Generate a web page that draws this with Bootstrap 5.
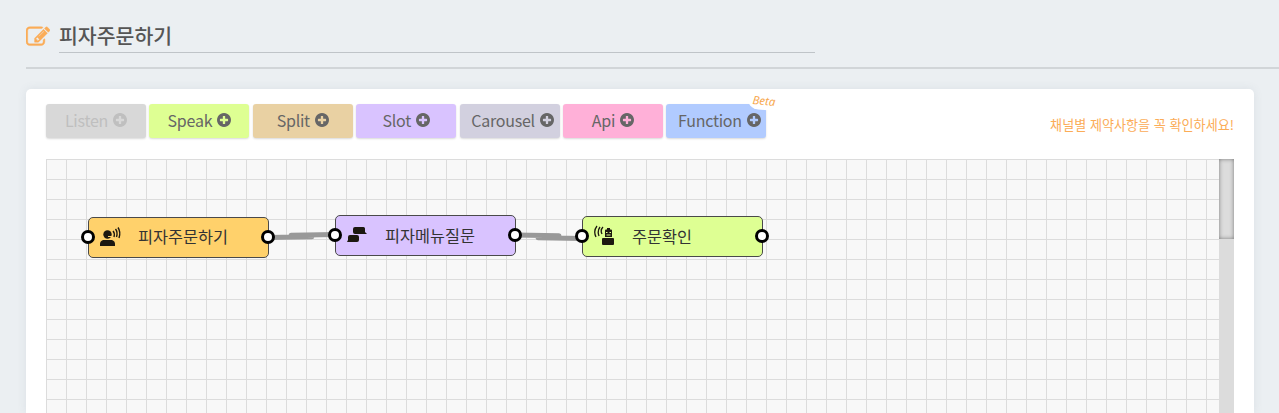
<!DOCTYPE html>
<html lang="ko">
<head>
<meta charset="utf-8">
<meta name="viewport" content="width=device-width, initial-scale=1">
<title>피자주문하기</title>
<link rel="stylesheet" href="https://cdn.jsdelivr.net/npm/bootstrap@5.3.0/dist/css/bootstrap.min.css">
<style>
body{background:#ebeff2;color:#555;font-family:"Noto Sans CJK KR",sans-serif;height:413px;overflow:hidden}
.page-head{margin-left:26px;height:69px;border-bottom:2px solid #d1d5d8;padding-top:19px}
.head-icon{width:24px;height:24px;margin-top:6px;color:#fbac57}
.scenario-name{width:756px;height:34px;margin-left:9px;border-bottom:1px solid #bfc4c8;font-size:20.5px;line-height:32px;font-weight:500}
.panel{margin:20px 25px 0 26px;height:324px;padding:15px 20px 0;border-radius:5px 5px 0 0;box-shadow:0 0 10px rgba(80,100,120,.1)}
.tools{height:55px}
.tool{width:100px;height:34px;margin-right:3.4px;padding:0 0 2px;border:0;border-radius:3px;color:#666;font:400 16px/32px "Noto Sans CJK KR",sans-serif;letter-spacing:-.25px;box-shadow:0 1px 2px rgba(0,0,0,.15);gap:5px}
.tool svg{width:14px;height:14px}
.t-listen{background:#d8d8d8;color:#bfbfbf}.t-speak{background:#deff93}.t-split{background:#e9d1a3}
.t-slot{background:#d9c3ff}.t-carousel{background:#d2d0df}.t-api{background:#ffb0d8}.t-function{background:#b1cbff}
.t-carousel,.t-function{padding-left:6px}
.beta{left:81px;top:-13px;width:34px;height:19px;border-radius:0 0 0 12px;background:#fff;transform:rotate(5deg);color:#f7a94f;font-family:"Noto Sans",sans-serif;font-size:11.5px;letter-spacing:0;line-height:19px;font-style:italic;text-align:center}
.notice{font-size:13.1px;line-height:20px;color:#fbac57;margin-top:11px}
.flow{height:254px}
.board{background-color:#f8f8f8;background-image:linear-gradient(#dcdcdc 1px,transparent 1px),linear-gradient(90deg,#dcdcdc 1px,transparent 1px);background-size:20px 20px}
.track{width:15px;background:#dcdcdc}
.thumb{height:80px;background:#dcdcdc;box-shadow:inset 0 0 4px #777}
.node{width:181px;height:41px;border:1px solid #4a4a4a;border-radius:5px;color:#333;font-size:16.3px;line-height:38px}
.node .glyph{position:absolute;left:10px;top:7px;width:24px;height:24px;color:#1c1810}
.node .caption{padding-left:49px}
.node-listen{line-height:36px}
.port{width:14px;height:14px;border:3px solid #000;border-radius:50%;background:#fff;top:12px}
.port-in{left:-8px}.port-out{right:-7px}
.links{left:0;top:0}
</style>
<script src="https://cdn.jsdelivr.net/npm/bootstrap@5.3.0/dist/js/bootstrap.bundle.min.js"></script>
</head>
<body>
<svg class="d-none"><symbol id="plus" viewBox="128 128 1536 1536"><path fill="currentColor" d="M1344 960v-128q0-26-19-45t-45-19h-256v-256q0-26-19-45t-45-19h-128q-26 0-45 19t-19 45v256h-256q-26 0-45 19t-19 45v128q0 26 19 45t45 19h256v256q0 26 19 45t45 19h128q26 0 45-19t19-45v-256h256q26 0 45-19t19-45zm320-64q0 209-103 385.500t-279.500 279.500-385.500 103-385.500-103-279.500-279.500-103-385.500 103-385.500 279.500-279.500 385.500-103 385.500 103 279.500 279.500 103 385.500z"/></symbol></svg>
<header class="page-head d-flex align-items-start">
<svg class="head-icon flex-shrink-0" viewBox="0 0 1792 1792"><path fill="currentColor" stroke="currentColor" stroke-width="30" d="M888 1184l116-116-152-152-116 116v56h96v96h56zm440-720q-16-16-33 1l-350 350q-17 17-1 33t33-1l350-350q17-17 1-33zm80 594v190q0 119-84.500 203.500t-203.500 84.500h-832q-119 0-203.500-84.500t-84.500-203.500v-832q0-119 84.500-203.500t203.500-84.500h832q63 0 117 25 15 7 18 23 3 17-9 29l-49 49q-14 14-32 8-23-6-45-6h-832q-66 0-113 47t-47 113v832q0 66 47 113t113 47h832q66 0 113-47t47-113v-126q0-13 9-22l64-64q15-15 35-7t20 29zm-96-738l288 288-672 672h-288v-288zm444 132l-92 92-288-288 92-92q28-28 68-28t68 28l152 152q28 28 28 68t-28 68z"/></svg>
<div class="scenario-name">피자주문하기</div>
</header>
<main class="panel bg-white">
<div class="tools d-flex align-items-start">
<button class="tool t-listen d-flex align-items-center justify-content-center"><span>Listen</span><svg><use href="#plus"/></svg></button>
<button class="tool t-speak d-flex align-items-center justify-content-center"><span>Speak</span><svg><use href="#plus"/></svg></button>
<button class="tool t-split d-flex align-items-center justify-content-center"><span>Split</span><svg><use href="#plus"/></svg></button>
<button class="tool t-slot d-flex align-items-center justify-content-center"><span>Slot</span><svg><use href="#plus"/></svg></button>
<button class="tool t-carousel d-flex align-items-center justify-content-center"><span>Carousel</span><svg><use href="#plus"/></svg></button>
<button class="tool t-api d-flex align-items-center justify-content-center"><span>Api</span><svg><use href="#plus"/></svg></button>
<button class="tool t-function d-flex align-items-center justify-content-center position-relative"><span>Function</span><svg><use href="#plus"/></svg><span class="beta position-absolute">Beta</span></button>
<div class="notice ms-auto">채널별 제약사항을 꼭 확인하세요!</div>
</div>
<div class="flow d-flex">
<div class="board flex-grow-1 position-relative overflow-hidden">
<svg class="links position-absolute" width="760" height="120" fill="none" stroke="#999" stroke-width="5" stroke-linecap="round"><path d="M222 78.500L266 77.800M245 76.300L289 75.500M469 76L513 76.800M492 78.800L536 79.500"/></svg>
<div class="node node-listen position-absolute" style="left:42px;top:58px;background:#ffd16b"><svg class="glyph" viewBox="0 0 24 24"><g fill="currentColor"><path d="M1 21v-2q0-3 3-4h9q3 1 3 4v2z"/><circle cx="8.500" cy="9.500" r="4.200"/></g><path d="M9 11.500h4" stroke="#ffd16b" stroke-width="1"/><path d="M14 6q2 2 1 6M16.500 4q2.500 3 1 8M19 2.500q3 4.500 1 10.500" fill="none" stroke="currentColor" stroke-width="1.400"/></svg><span class="caption">피자주문하기</span><i class="port port-in position-absolute"></i><i class="port port-out position-absolute"></i></div>
<div class="node position-absolute" style="left:289px;top:56px;background:#d9c3ff"><svg class="glyph" viewBox="0 0 24 24" fill="currentColor"><path d="M9 4h8.500q1.500 0 1.500 1.500V9l2 2H9q-2 0-2-2V6q0-2 2-2zM4 12h7q2 0 2 2v3q0 2-2 2H1l1-2v-3q0-2 2-2z"/></svg><span class="caption">피자메뉴질문</span><i class="port port-in position-absolute"></i><i class="port port-out position-absolute"></i></div>
<div class="node position-absolute" style="left:536px;top:57px;background:#deff93"><svg class="glyph" viewBox="0 0 24 24"><g fill="currentColor"><path d="M12 6.500q0-1 1-1h1V4h3v1.500h1q1 0 1 1V13h-7z"/><rect x="9" y="14" width="12" height="7" rx="1"/></g><path d="M13 8.500h1.500M16.500 8.500H18M13.500 11h4" stroke="#deff93"/><path d="M4 2q-4 5-1 11M7 3q-3 4-1 9M10 3q-3 3-1 7" fill="none" stroke="currentColor" stroke-width="1.300"/></svg><span class="caption">주문확인</span><i class="port port-in position-absolute"></i><i class="port port-out position-absolute"></i></div>
</div>
<div class="track"><div class="thumb"></div></div>
</div>
</main>
</body>
</html>
